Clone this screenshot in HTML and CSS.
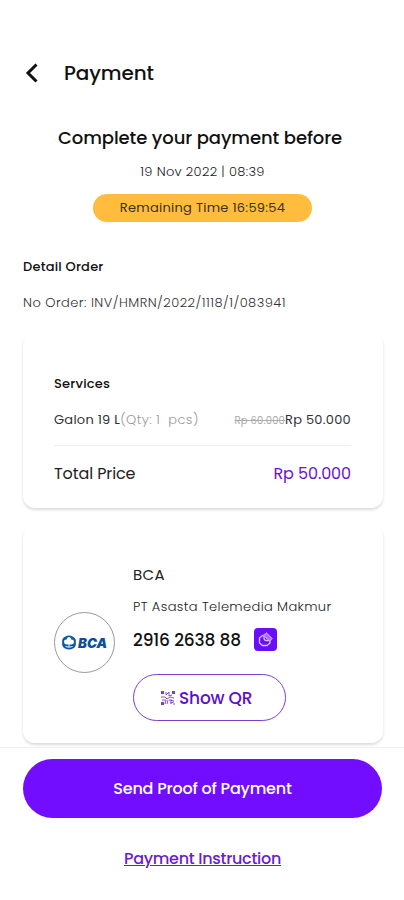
FILE: index.html
```html
<!DOCTYPE html>
<html lang="en">
<head>
<meta charset="UTF-8">
<meta name="viewport" content="width=device-width, initial-scale=1">
<title>Payment</title>
<link rel="stylesheet" href="styles.css">
</head>
<body>
	<div class="page">
		<header class="header">
			<svg class="back" width="14" height="20" viewBox="0 0 14 20"><path d="M11.500 1.500 3 10l8.500 8.500" fill="none" stroke="#111" stroke-width="3"/></svg>
			<h1>Payment</h1>
		</header>

		<div class="deadline">
			<h2>Complete your payment before</h2>
			<p class="date">19 Nov 2022 | 08:39</p>
			<div class="timer">Remaining Time 16:59:54</div>
		</div>

		<div class="order">
			<h3>Detail Order</h3>
			<p>No Order: <span class="inv">INV/HMRN/2022/1118/1/083941</span></p>
		</div>

		<div class="card services">
			<h3>Services</h3>
			<div class="row item">
				<div><span class="name">Galon 19 L</span><span class="qty">(Qty: 1&nbsp; pcs)</span></div>
				<div><del>Rp 60.000</del><span class="price">Rp 50.000</span></div>
			</div>
			<div class="row total">
				<span class="label">Total Price</span>
				<span class="sum">Rp 50.000</span>
			</div>
		</div>

		<div class="card bank">
			<div class="logo">
				<svg width="48" height="18" viewBox="0 0 48 18">
					<path d="M4 2.800Q8 .2 12 2.800Q15.500 4.500 14.800 8.500Q15.500 12.500 12 14.500Q8 16.500 4 14.500Q.5 12.500 1.200 8.500Q.5 4.500 4 2.800Z" fill="#0b5aa8"/>
					<path d="M8 3q2.200 0 2.200 2.500q2.800-.3 2.800 2.200t-2.800 2.700H5.800Q3 10.200 3 7.700t2.800-2.200Q5.800 3 8 3Z" fill="#fff"/>
					<path d="M8 9v4M4.500 12.500q3.500 1.500 7 0" fill="none" stroke="#fff" stroke-width=".9"/>
					<text class="bca" x="17" y="14" textLength="29" lengthAdjust="spacingAndGlyphs">BCA</text>
				</svg>
			</div>
			<div class="info">
				<p class="bank-name">BCA</p>
				<p class="holder">PT Asasta Telemedia Makmur</p>
				<div class="number">
					<span>2916 2638 88</span>
					<svg class="copy" width="23" height="23" viewBox="0 0 23 23">
						<rect width="23" height="23" rx="4" fill="#6a0dfa"/>
						<path d="M9.500 7.500H8.500L5.500 10v5L8.500 17.500h4.500l3-2.500v-2M10 7.500v2.500q0 2.500 2.500 2.500h3.500" fill="none" stroke="#dcc0ff" stroke-width="1.300"/>
						<path d="M9.500 7.500 12.500 5l5.500 5.500-2 2.500Z" fill="#a366ff" stroke="#c79bff" stroke-width="1.200"/>
					</svg>
				</div>
				<button class="qr">
					<svg width="14" height="14" viewBox="0 0 14 14" fill="none" stroke="#7a3fc8">
						<path d="M0 1.500h3M11 1.500h3M0 12.500h3" stroke-width="3"/>
						<path d="M5 1v3l3-3v4l3-1M0 6h4l2 2 3-2 4 1M1 9h4l-1 4M7 9l-1 4M8 9l5 1M9 12l4-1M10 8v5M12 13h2" stroke-width=".9"/>
					</svg>
					<span>Show QR</span>
				</button>
			</div>
		</div>

		<footer class="footer">
			<button class="send">Send Proof of Payment</button>
			<a class="instruction">Payment Instruction</a>
		</footer>
	</div>
</body>
</html>
```
FILE: styles.css
```css
*{margin: 0;padding: 0;box-sizing: border-box;}
body{
	font-family: Poppins, Inter, sans-serif;
	background: #fff;
	color: #111;
}
.page{
	width: 404px;
	height: 900px;
	overflow: hidden;
	display: flex;
	flex-direction: column;
}
.header{
	display: flex;
	align-items: center;
	gap: 25px;
	height: 64px;
	padding-left: 25px;
	margin-top: 41px;
}
.header h1{
	font-size: 20px;
	line-height: 28px;
	font-weight: 500;
	letter-spacing: -.1px;
}
.deadline{
	padding-top: 19px;
	display: flex;
	flex-direction: column;
	align-items: center;
	padding-right: 4px;
}
.deadline h2{
	font-size: 18px;
	line-height: 28px;
	font-weight: 500;
	letter-spacing: -.08px;
}
.date{
	font-size: 13px;
	line-height: 20px;
	margin: 10px 0 0 5px;
	font-weight: 300;
	letter-spacing: .32px;
	color: #222;
}
.timer{
	width: 219px;
	height: 28px;
	margin-top: 12px;
	margin-left: 5px;
	border-radius: 14px;
	background: #ffbc3f;
	color: #3d3118;
	font-size: 13px;
	line-height: 28px;
	letter-spacing: .27px;
	text-align: center;
}
.order{padding: 35px 23px 0;}
.order h3, .services h3{
	font-size: 13px;
	line-height: 20px;
	font-weight: 500;
	letter-spacing: .2px;
}
.order p{
	font-size: 13px;
	line-height: 20px;
	margin-top: 16px;
	font-weight: 300;
	letter-spacing: .46px;
	color: #333;
}
.card{
	flex: none;
	margin: 0 21px 0 23px;
	border-radius: 12px;
	background: #fff;
	box-shadow: 0 2px 3px rgba(0,0,0,.14);
	clip-path: inset(4px -4px -6px -4px);
}
.services{
	height: 175px;
	margin-top: 20px;
	padding: 41px 32px 0 31px;
}
.row{
	display: flex;
	justify-content: space-between;
	align-items: center;
}
.item{
	height: 52px;
	border-bottom: 1px solid #f0f0f0;
	font-size: 13px;
	color: #333;
}
.name{letter-spacing: .25px;}
.qty{
	color: #999;
	font-weight: 300;
	letter-spacing: .42px;
}
.item del{
	font-size: 10px;
	letter-spacing: .15px;
	color: #aaa;
}
.price{letter-spacing: .25px;}
.total{
	height: 54px;
	font-size: 16px;
	letter-spacing: -.1px;
	color: #222;
}
.sum{color: #6a12d8;}
.bank{
	display: flex;
	height: 218px;
	margin-top: 17px;
	padding: 40px 31px 0;
}
.logo{
	width: 61px;
	height: 61px;
	margin-top: 47px;
	border: 1px solid #999;
	border-radius: 50%;
	display: flex;
	align-items: center;
	justify-content: center;
}
.bca{
	font: italic 900 13px Inter, sans-serif;
	fill: #0b4f9c;
}
.info{margin-left: 18px;}
.bank-name{
	font-size: 15px;
	line-height: 20px;
	letter-spacing: .3px;
	color: #222;
}
.holder{
	font-size: 13px;
	line-height: 20px;
	margin-top: 12px;
	font-weight: 300;
	letter-spacing: .38px;
	color: #222;
	white-space: nowrap;
}
.number{
	display: flex;
	align-items: center;
	justify-content: space-between;
	width: 144px;
	height: 23px;
	margin-top: 11px;
	font-size: 17px;
	font-weight: 500;
	letter-spacing: -.15px;
	white-space: nowrap;
}
.qr{
	display: flex;
	align-items: center;
	width: 153px;
	height: 47px;
	margin-top: 23px;
	padding-left: 27px;
	gap: 4px;
	border: 1px solid #7d3fd0;
	border-radius: 24px;
	background: #fff;
	color: #5a0fd0;
	font-family: inherit;
	font-size: 17px;
	font-weight: 500;
	letter-spacing: -.2px;
	white-space: nowrap;
}
.footer{
	flex: 1;
	margin-top: 4px;
	padding-top: 11px;
	border-top: 1px solid #f0f0f0;
	display: flex;
	flex-direction: column;
	align-items: center;
	background: #fff;
}
.send{
	width: 359px;
	height: 59px;
	margin-left: 1px;
	border: 0;
	border-radius: 30px;
	background: #720dff;
	color: #fff;
	font-family: inherit;
	font-size: 16px;
	font-weight: 500;
	letter-spacing: -.2px;
}
.instruction{
	margin: 30px 0 0 1px;
	font-size: 16px;
	line-height: 22px;
	font-weight: 500;
	letter-spacing: -.3px;
	color: #6a1bd0;
	text-decoration: underline;
}
```
